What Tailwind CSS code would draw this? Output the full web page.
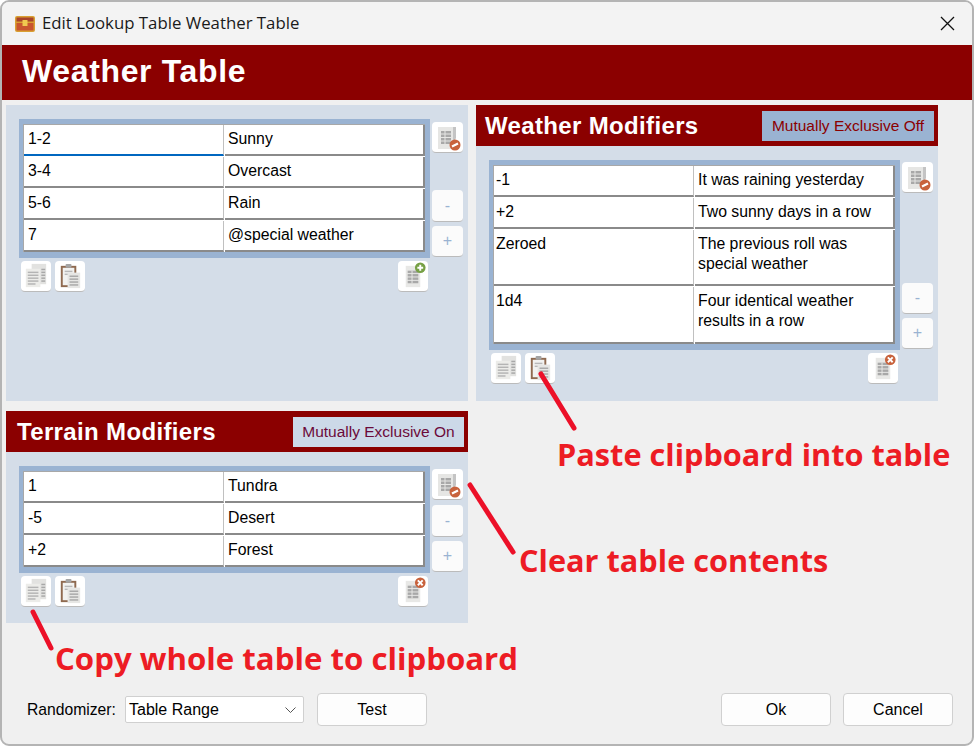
<!DOCTYPE html>
<html lang="en">
<head>
  <meta charset="UTF-8" />
  <title>Edit Lookup Table Weather Table</title>
  <script src="https://cdn.jsdelivr.net/npm/@tailwindcss/browser@4"></script>
</head>
<body class="bg-white font-['Liberation_Sans',sans-serif] text-black">

  <!-- shared button icons -->
  <svg class="hidden" xmlns="http://www.w3.org/2000/svg">
    <symbol id="sheet" viewBox="0 0 31 31">
      <rect x="8" y="5" width="15" height="22" fill="#e8e8e6"/>
      <g fill="#a8a8a8">
        <rect x="10" y="10" width="11" height="2.5"/>
        <rect x="10" y="13.5" width="11" height="2.5"/>
        <rect x="10" y="17" width="11" height="2.5"/>
        <rect x="10" y="20.5" width="11" height="2.5"/>
      </g>
      <rect x="14" y="10" width="1" height="13" fill="#e8e8e6"/>
    </symbol>
    <symbol id="clear" viewBox="0 0 31 31">
      <rect x="6" y="5" width="16" height="22" fill="#e6e6e4"/>
      <g fill="#a8a8a8">
        <rect x="9" y="9" width="10" height="2.5"/>
        <rect x="9" y="12.5" width="10" height="2.5"/>
        <rect x="9" y="16" width="10" height="2.5"/>
        <rect x="9" y="19.5" width="10" height="2.5"/>
      </g>
      <rect x="12.5" y="9" width="1" height="13" fill="#e6e6e4"/>
      <path d="M21 5h3v11l-1 2h-2z" fill="#c4c4c4"/>
      <circle cx="23" cy="23" r="5.5" fill="#c8623c"/>
      <path d="M20 24.5l6-3" stroke="#fff" stroke-width="2"/>
    </symbol>
    <symbol id="copy" viewBox="0 0 31 31">
      <rect x="11" y="3" width="15" height="21" fill="#e2e2e0"/>
      <g fill="#a8a8a8">
        <rect x="21" y="8" width="4" height="1.5"/>
        <rect x="21" y="11" width="4" height="1.5"/>
        <rect x="21" y="14" width="4" height="1.5"/>
        <rect x="21" y="17" width="4" height="1.5"/>
        <rect x="21" y="20" width="4" height="1.5"/>
      </g>
      <rect x="5" y="8" width="15" height="19" fill="#ecece9"/>
      <g fill="#b4b4b4">
        <rect x="7" y="11" width="11" height="1.5"/>
        <rect x="7" y="14" width="11" height="1.5"/>
        <rect x="7" y="17" width="11" height="1.5"/>
        <rect x="7" y="20" width="11" height="1.5"/>
        <rect x="7" y="23" width="8" height="1.5"/>
      </g>
    </symbol>
    <symbol id="paste" viewBox="0 0 31 31">
      <rect x="6" y="5" width="16" height="22" fill="#8f6a50"/>
      <rect x="8" y="7" width="12" height="18" fill="#f2f2f0"/>
      <rect x="11" y="3" width="6" height="4" rx="1" fill="#a4a4a4"/>
      <g fill="#b8b8b8">
        <rect x="10" y="10" width="8" height="1.5"/>
        <rect x="10" y="13" width="4" height="1.5"/>
      </g>
      <rect x="13" y="12" width="13" height="16" fill="#e6e6e4"/>
      <g fill="#a8a8a8">
        <rect x="15" y="15" width="9" height="1.5"/>
        <rect x="15" y="18" width="9" height="1.5"/>
        <rect x="15" y="21" width="9" height="1.5"/>
        <rect x="15" y="24" width="9" height="1.5"/>
      </g>
    </symbol>
  </svg>

  <div class="relative w-[974px] h-[746px] overflow-hidden flex flex-col bg-[#f0f0f0] border-2 border-[#b4b4b4] rounded-[9px]">

    <!-- title bar -->
    <div class="h-[43px] shrink-0 flex items-center pl-[13px] bg-[#f3f3f3]">
      <svg class="w-[20px] h-[18px]" viewBox="0 0 20 18">
        <rect x="0" y="1" width="20" height="16" rx="2" fill="#d9a032"/>
        <rect x="1.5" y="2.5" width="17" height="4" fill="#a8432a"/>
        <rect x="1.5" y="8" width="17" height="7.5" fill="#c9552f"/>
        <rect x="7.5" y="5" width="5" height="6" fill="#f0c850"/>
      </svg>
      <span class="ml-[7px] mb-[2px] font-['Open_Sans',sans-serif] text-[16.8px] text-[#1a1a1a]">Edit Lookup Table Weather Table</span>
      <svg class="ml-auto mr-[17px] w-[15px] h-[15px]" viewBox="0 0 15 15">
        <path d="M1 1l13 13M14 1L1 14" stroke="#111" stroke-width="1.3" fill="none"/>
      </svg>
    </div>

    <!-- banner -->
    <div class="h-[55px] shrink-0 flex items-center pl-[20px] pb-[4px] bg-[#8b0000]">
      <h1 class="text-[32px] font-bold text-white tracking-[0.65px]">Weather Table</h1>
    </div>

    <!-- tables -->
    <div class="flex gap-[8px] pl-[4px] pt-[5px]">

      <div class="w-[462px] flex flex-col gap-[10px]">
        <section class="h-[296px] bg-[#d4dde8] pl-[13px] pt-[14px]">
          <div class="flex gap-[2px]">
            <div class="w-[411px] bg-[#9ab3d2] pl-[4px] pt-[5px] pb-[6px]">
              <div class="w-[402px] bg-white border-t border-l border-[#a8a8a8] flex flex-col gap-[1px] text-[15.8px]">
                <div class="flex gap-[1px] h-[31px]">
                  <div class="w-[200px] border-r border-b-2 border-b-[#0067c0] border-r-[#c0c0c0] pl-[4px] pt-[5px] leading-[18px]">1-2</div>
                  <div class="w-[200px] border-r-2 border-b-2 border-[#8a8a8a] pl-[3px] pt-[5px] leading-[18px]">Sunny</div>
                </div>
                <div class="flex gap-[1px] h-[31px]">
                  <div class="w-[200px] border-r border-b-2 border-b-[#8a8a8a] border-r-[#c0c0c0] pl-[4px] pt-[5px] leading-[18px]">3-4</div>
                  <div class="w-[200px] border-r-2 border-b-2 border-[#8a8a8a] pl-[3px] pt-[5px] leading-[18px]">Overcast</div>
                </div>
                <div class="flex gap-[1px] h-[31px]">
                  <div class="w-[200px] border-r border-b-2 border-b-[#8a8a8a] border-r-[#c0c0c0] pl-[4px] pt-[5px] leading-[18px]">5-6</div>
                  <div class="w-[200px] border-r-2 border-b-2 border-[#8a8a8a] pl-[3px] pt-[5px] leading-[18px]">Rain</div>
                </div>
                <div class="flex gap-[1px] h-[31px]">
                  <div class="w-[200px] border-r border-b-2 border-b-[#8a8a8a] border-r-[#c0c0c0] pl-[4px] pt-[5px] leading-[18px]">7</div>
                  <div class="w-[200px] border-r-2 border-b-2 border-[#8a8a8a] pl-[3px] pt-[5px] leading-[18px]">@special weather</div>
                </div>
              </div>
            </div>
            <div class="w-[31px] flex flex-col pt-[3px] pb-[1px]">
              <button class="w-[31px] h-[31px] bg-white rounded-[4px] border-b border-[#bbb]"><svg class="w-[31px] h-[31px]"><use href="#clear"/></svg></button>
              <div class="mt-auto flex flex-col gap-[4px]">
                <button class="w-[31px] h-[32px] bg-[#fbfbfb] rounded-[4px] border-b border-[#bbb] text-[#9ab3d2] text-[16px]">-</button>
                <button class="w-[31px] h-[31px] bg-[#fbfbfb] rounded-[4px] border-b border-[#bbb] text-[#9ab3d2] text-[16px]">+</button>
              </div>
            </div>
          </div>
          <div class="w-[411px] flex gap-[4px] mt-[3px] px-[2px]">
            <button class="w-[30px] h-[31px] bg-white rounded-[4px] border-b border-[#bbb]"><svg class="w-[30px] h-[30px]"><use href="#copy"/></svg></button>
            <button class="w-[30px] h-[31px] bg-white rounded-[4px] border-b border-[#bbb]"><svg class="w-[30px] h-[30px]"><use href="#paste"/></svg></button>
            <button class="ml-auto w-[30px] h-[31px] bg-white rounded-[4px] border-b border-[#bbb]">
              <svg class="w-[30px] h-[30px]" viewBox="0 0 31 31"><use href="#sheet"/><circle cx="23" cy="7" r="5.5" fill="#76a045"/><path d="M23 4v6M20 7h6" stroke="#fff" stroke-width="2"/></svg>
            </button>
          </div>
        </section>

        <section>
          <div class="h-[41px] bg-[#8b0000] flex items-center pl-[11px] pr-[4px]">
            <h2 class="pt-[1px] text-[24px] font-bold text-white tracking-[0.35px]">Terrain Modifiers</h2>
            <span class="ml-auto w-[171px] h-[30px] pt-[1px] flex items-center justify-center bg-[#ccd9e8] text-[15.5px] text-[#6b0a3a]">Mutually Exclusive On</span>
          </div>
          <div class="h-[171px] bg-[#d4dde8] pl-[13px] pt-[14px]">
            <div class="flex gap-[2px]">
              <div class="w-[411px] bg-[#9ab3d2] pl-[4px] pt-[5px] pb-[6px]">
                <div class="w-[402px] bg-white border-t border-l border-[#a8a8a8] flex flex-col gap-[1px] text-[15.8px]">
                  <div class="flex gap-[1px] h-[31px]">
                    <div class="w-[200px] border-r border-b-2 border-b-[#8a8a8a] border-r-[#c0c0c0] pl-[4px] pt-[5px] leading-[18px]">1</div>
                    <div class="w-[200px] border-r-2 border-b-2 border-[#8a8a8a] pl-[3px] pt-[5px] leading-[18px]">Tundra</div>
                  </div>
                  <div class="flex gap-[1px] h-[31px]">
                    <div class="w-[200px] border-r border-b-2 border-b-[#8a8a8a] border-r-[#c0c0c0] pl-[4px] pt-[5px] leading-[18px]">-5</div>
                    <div class="w-[200px] border-r-2 border-b-2 border-[#8a8a8a] pl-[3px] pt-[5px] leading-[18px]">Desert</div>
                  </div>
                  <div class="flex gap-[1px] h-[31px]">
                    <div class="w-[200px] border-r border-b-2 border-b-[#8a8a8a] border-r-[#c0c0c0] pl-[4px] pt-[5px] leading-[18px]">+2</div>
                    <div class="w-[200px] border-r-2 border-b-2 border-[#8a8a8a] pl-[3px] pt-[5px] leading-[18px]">Forest</div>
                  </div>
                </div>
              </div>
              <div class="w-[31px] flex flex-col pt-[3px] pb-[1px]">
                <button class="w-[31px] h-[31px] bg-white rounded-[4px] border-b border-[#bbb]"><svg class="w-[31px] h-[31px]"><use href="#clear"/></svg></button>
                <div class="mt-auto flex flex-col gap-[4px]">
                  <button class="w-[31px] h-[32px] bg-[#fbfbfb] rounded-[4px] border-b border-[#bbb] text-[#9ab3d2] text-[16px]">-</button>
                  <button class="w-[31px] h-[31px] bg-[#fbfbfb] rounded-[4px] border-b border-[#bbb] text-[#9ab3d2] text-[16px]">+</button>
                </div>
              </div>
            </div>
            <div class="w-[411px] flex gap-[4px] mt-[3px] px-[2px]">
              <button class="w-[30px] h-[31px] bg-white rounded-[4px] border-b border-[#bbb]"><svg class="w-[30px] h-[30px]"><use href="#copy"/></svg></button>
              <button class="w-[30px] h-[31px] bg-white rounded-[4px] border-b border-[#bbb]"><svg class="w-[30px] h-[30px]"><use href="#paste"/></svg></button>
              <button class="ml-auto w-[30px] h-[31px] bg-white rounded-[4px] border-b border-[#bbb]">
                <svg class="w-[30px] h-[30px]" viewBox="0 0 31 31"><use href="#sheet"/><circle cx="23" cy="7" r="5.5" fill="#c8623c"/><path d="M20.5 4.5l5 5M25.5 4.5l-5 5" stroke="#fff" stroke-width="2"/></svg>
              </button>
            </div>
          </div>
        </section>
      </div>

      <section class="w-[462px] self-start">
        <div class="h-[41px] bg-[#8b0000] flex items-center pl-[9px] pr-[4px]">
          <h2 class="pt-[1px] text-[24px] font-bold text-white tracking-[0.35px]">Weather Modifiers</h2>
          <span class="ml-auto w-[172px] h-[30px] pt-[1px] flex items-center justify-center bg-[#9ab3d2] text-[15.5px] text-[#8b0000]">Mutually Exclusive Off</span>
        </div>
        <div class="h-[255px] bg-[#d4dde8] pl-[13px] pt-[14px]">
          <div class="flex gap-[2px]">
            <div class="w-[411px] bg-[#9ab3d2] pl-[4px] pt-[5px] pb-[6px]">
              <div class="w-[402px] bg-white border-t border-l border-[#a8a8a8] flex flex-col gap-[1px] text-[15.8px]">
                <div class="flex gap-[1px] h-[31px]">
                  <div class="w-[200px] border-r border-b-2 border-b-[#8a8a8a] border-r-[#c0c0c0] pl-[2px] pt-[5px] leading-[18px]">-1</div>
                  <div class="w-[200px] border-r-2 border-b-2 border-[#8a8a8a] pl-[3px] pt-[5px] leading-[18px]">It was raining yesterday</div>
                </div>
                <div class="flex gap-[1px] h-[31px]">
                  <div class="w-[200px] border-r border-b-2 border-b-[#8a8a8a] border-r-[#c0c0c0] pl-[2px] pt-[5px] leading-[18px]">+2</div>
                  <div class="w-[200px] border-r-2 border-b-2 border-[#8a8a8a] pl-[3px] pt-[5px] leading-[18px]">Two sunny days in a row</div>
                </div>
                <div class="flex gap-[1px] h-[56px]">
                  <div class="w-[200px] border-r border-b-2 border-b-[#8a8a8a] border-r-[#c0c0c0] pl-[2px] pt-[4px] leading-[20px]">Zeroed</div>
                  <div class="w-[200px] border-r-2 border-b-2 border-[#8a8a8a] pl-[3px] pt-[4px] leading-[20px]">The previous roll was special weather</div>
                </div>
                <div class="flex gap-[1px] h-[57px]">
                  <div class="w-[200px] border-r border-b-2 border-b-[#8a8a8a] border-r-[#c0c0c0] pl-[2px] pt-[4px] leading-[20px]">1d4</div>
                  <div class="w-[200px] border-r-2 border-b-2 border-[#8a8a8a] pl-[3px] pt-[4px] leading-[20px]">Four identical weather results in a row</div>
                </div>
              </div>
            </div>
            <div class="w-[31px] flex flex-col pt-[2px] pb-[1px]">
              <button class="w-[31px] h-[31px] bg-white rounded-[4px] border-b border-[#bbb]"><svg class="w-[31px] h-[31px]"><use href="#clear"/></svg></button>
              <div class="mt-auto flex flex-col gap-[4px]">
                <button class="w-[31px] h-[31px] bg-[#fbfbfb] rounded-[4px] border-b border-[#bbb] text-[#9ab3d2] text-[16px]">-</button>
                <button class="w-[31px] h-[31px] bg-[#fbfbfb] rounded-[4px] border-b border-[#bbb] text-[#9ab3d2] text-[16px]">+</button>
              </div>
            </div>
          </div>
          <div class="w-[411px] flex gap-[4px] mt-[3px] px-[2px]">
            <button class="w-[30px] h-[31px] bg-white rounded-[4px] border-b border-[#bbb]"><svg class="w-[30px] h-[30px]"><use href="#copy"/></svg></button>
            <button class="w-[30px] h-[31px] bg-white rounded-[4px] border-b border-[#bbb]"><svg class="w-[30px] h-[30px]"><use href="#paste"/></svg></button>
            <button class="ml-auto w-[30px] h-[31px] bg-white rounded-[4px] border-b border-[#bbb]">
              <svg class="w-[30px] h-[30px]" viewBox="0 0 31 31"><use href="#sheet"/><circle cx="23" cy="7" r="5.5" fill="#c8623c"/><path d="M20.5 4.5l5 5M25.5 4.5l-5 5" stroke="#fff" stroke-width="2"/></svg>
            </button>
          </div>
        </div>
      </section>
    </div>

    <!-- footer -->
    <div class="mt-auto h-[33px] mb-[18px] shrink-0 flex items-center pl-[25px] pr-[19px] text-[16px]">
      <span class="w-[89px] text-[15.7px] whitespace-nowrap">Randomizer:</span>
      <div class="ml-[9px] w-[179px] h-[27px] flex items-center justify-between pl-[3px] pr-[7px] bg-white border border-[#d0d0d0] rounded-[2px]">
        <span>Table Range</span>
        <svg class="w-[11px] h-[6px]" viewBox="0 0 11 6"><path d="M.5.5l5 5 5-5" stroke="#555" fill="none"/></svg>
      </div>
      <button class="ml-[13px] w-[110px] h-[33px] bg-[#fdfdfd] border border-[#d0d0d0] rounded-[4px]">Test</button>
      <button class="ml-auto w-[110px] h-[33px] bg-[#fdfdfd] border border-[#d0d0d0] rounded-[4px]">Ok</button>
      <button class="ml-[12px] w-[110px] h-[33px] bg-[#fdfdfd] border border-[#d0d0d0] rounded-[4px]">Cancel</button>
    </div>

    <!-- red annotations drawn over the screenshot -->
    <svg class="absolute left-[-2px] top-[-2px] w-[974px] h-[746px] pointer-events-none" viewBox="0 0 974 746">
      <g stroke="#ec1028" stroke-width="5" stroke-linecap="round">
        <path d="M541 374L574 428"/>
        <path d="M470 485L513 552"/>
        <path d="M33 612L51 648"/>
      </g>
    </svg>
    <span class="absolute left-[555px] top-[431px] font-['Open_Sans',sans-serif] font-bold text-[30.7px] leading-[42px] whitespace-nowrap text-[#ed1c24]">Paste clipboard into table</span>
    <span class="absolute left-[517px] top-[537px] font-['Open_Sans',sans-serif] font-bold text-[30.7px] leading-[42px] whitespace-nowrap text-[#ed1c24]">Clear table contents</span>
    <span class="absolute left-[53px] top-[635px] font-['Open_Sans',sans-serif] font-bold text-[31.2px] leading-[42px] whitespace-nowrap text-[#ed1c24]">Copy whole table to clipboard</span>
  </div>

</body>
</html>
